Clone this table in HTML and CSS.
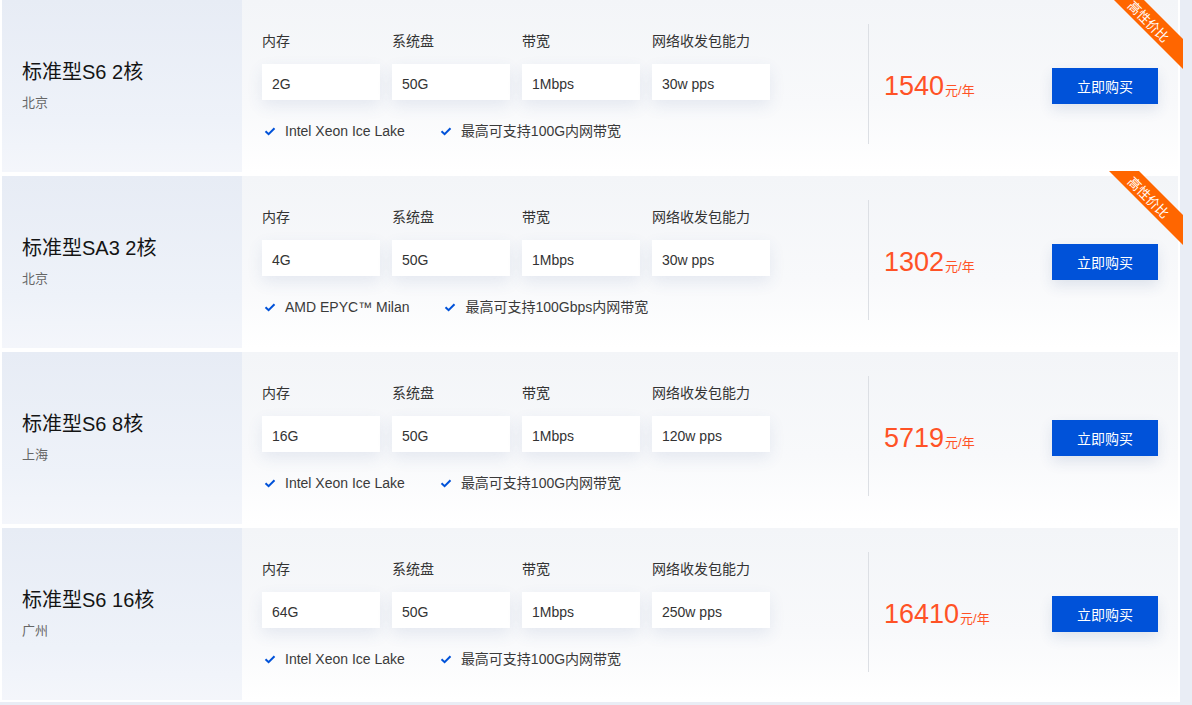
FILE: index.html
```html
<!DOCTYPE html>
<html lang="zh-CN">
<head>
<meta charset="utf-8">
<title>云服务器</title>
<link rel="stylesheet" href="styles.css">
</head>
<body>
<div class="list">
  <div class="card">
    <div class="info"><div class="name">标准型S6 2核</div><div class="region">北京</div></div>
    <div class="main">
      <div class="specs">
        <div class="grid">
          <div class="col"><div class="label">内存</div><div class="box">2G</div></div>
          <div class="col"><div class="label">系统盘</div><div class="box">50G</div></div>
          <div class="col"><div class="label">带宽</div><div class="box">1Mbps</div></div>
          <div class="col"><div class="label">网络收发包能力</div><div class="box">30w pps</div></div>
        </div>
        <div class="feats">
          <span class="feat"><svg class="check" viewBox="0 0 16 16"><path d="M3.5 8.2 L6.6 11.2 L12.5 5.2"/></svg>Intel Xeon Ice Lake</span>
          <span class="feat"><svg class="check" viewBox="0 0 16 16"><path d="M3.5 8.2 L6.6 11.2 L12.5 5.2"/></svg>最高可支持100G内网带宽</span>
        </div>
      </div>
      <div class="divider"></div>
      <div class="buy">
        <div class="price"><span class="num">1540</span><span class="unit">元/年</span></div>
        <button class="btn">立即购买</button>
      </div>
    </div>
    <svg class="ribbon" viewBox="0 0 74 74"><polygon points="0,0 30,0 74,44 74,74"/><text x="40" y="26" transform="rotate(45 40 26)">高性价比</text></svg>
  </div>

  <div class="card">
    <div class="info"><div class="name">标准型SA3 2核</div><div class="region">北京</div></div>
    <div class="main">
      <div class="specs">
        <div class="grid">
          <div class="col"><div class="label">内存</div><div class="box">4G</div></div>
          <div class="col"><div class="label">系统盘</div><div class="box">50G</div></div>
          <div class="col"><div class="label">带宽</div><div class="box">1Mbps</div></div>
          <div class="col"><div class="label">网络收发包能力</div><div class="box">30w pps</div></div>
        </div>
        <div class="feats">
          <span class="feat"><svg class="check" viewBox="0 0 16 16"><path d="M3.5 8.2 L6.6 11.2 L12.5 5.2"/></svg>AMD EPYC™ Milan</span>
          <span class="feat"><svg class="check" viewBox="0 0 16 16"><path d="M3.5 8.2 L6.6 11.2 L12.5 5.2"/></svg>最高可支持100Gbps内网带宽</span>
        </div>
      </div>
      <div class="divider"></div>
      <div class="buy">
        <div class="price"><span class="num">1302</span><span class="unit">元/年</span></div>
        <button class="btn">立即购买</button>
      </div>
    </div>
    <svg class="ribbon" viewBox="0 0 74 74"><polygon points="0,0 30,0 74,44 74,74"/><text x="40" y="26" transform="rotate(45 40 26)">高性价比</text></svg>
  </div>

  <div class="card">
    <div class="info"><div class="name">标准型S6 8核</div><div class="region">上海</div></div>
    <div class="main">
      <div class="specs">
        <div class="grid">
          <div class="col"><div class="label">内存</div><div class="box">16G</div></div>
          <div class="col"><div class="label">系统盘</div><div class="box">50G</div></div>
          <div class="col"><div class="label">带宽</div><div class="box">1Mbps</div></div>
          <div class="col"><div class="label">网络收发包能力</div><div class="box">120w pps</div></div>
        </div>
        <div class="feats">
          <span class="feat"><svg class="check" viewBox="0 0 16 16"><path d="M3.5 8.2 L6.6 11.2 L12.5 5.2"/></svg>Intel Xeon Ice Lake</span>
          <span class="feat"><svg class="check" viewBox="0 0 16 16"><path d="M3.5 8.2 L6.6 11.2 L12.5 5.2"/></svg>最高可支持100G内网带宽</span>
        </div>
      </div>
      <div class="divider"></div>
      <div class="buy">
        <div class="price"><span class="num">5719</span><span class="unit">元/年</span></div>
        <button class="btn">立即购买</button>
      </div>
    </div>
  </div>

  <div class="card">
    <div class="info"><div class="name">标准型S6 16核</div><div class="region">广州</div></div>
    <div class="main">
      <div class="specs">
        <div class="grid">
          <div class="col"><div class="label">内存</div><div class="box">64G</div></div>
          <div class="col"><div class="label">系统盘</div><div class="box">50G</div></div>
          <div class="col"><div class="label">带宽</div><div class="box">1Mbps</div></div>
          <div class="col"><div class="label">网络收发包能力</div><div class="box">250w pps</div></div>
        </div>
        <div class="feats">
          <span class="feat"><svg class="check" viewBox="0 0 16 16"><path d="M3.5 8.2 L6.6 11.2 L12.5 5.2"/></svg>Intel Xeon Ice Lake</span>
          <span class="feat"><svg class="check" viewBox="0 0 16 16"><path d="M3.5 8.2 L6.6 11.2 L12.5 5.2"/></svg>最高可支持100G内网带宽</span>
        </div>
      </div>
      <div class="divider"></div>
      <div class="buy">
        <div class="price"><span class="num">16410</span><span class="unit">元/年</span></div>
        <button class="btn">立即购买</button>
      </div>
    </div>
  </div>
</div>
</body>
</html>
```

FILE: styles.css
```css
html, body {
  margin: 0;
  padding: 0;
}
body {
  background: #e9edf5;
  font-family: "Liberation Sans", "Noto Sans CJK SC", sans-serif;
  color: #333;
}
.list {
  width: 1180px;
  box-sizing: border-box;
  background: #ffffff;
  padding: 0 2px 2px 2px;
  display: flex;
  flex-direction: column;
  gap: 4px;
}
.card {
  position: relative;
  height: 172px;
  display: flex;
}
.info {
  width: 240px;
  flex: none;
  box-sizing: border-box;
  padding-left: 20px;
  display: flex;
  flex-direction: column;
  justify-content: center;
  background: linear-gradient(180deg, #e7ecf5 0%, #eef2f9 70%, #f4f6fb 100%);
}
.name {
  font-size: 20px;
  line-height: 26px;
  color: #141414;
}
.region {
  margin-top: 8px;
  font-size: 13px;
  line-height: 20px;
  color: #666;
}
.main {
  flex: 1;
  display: flex;
  align-items: center;
  padding-left: 20px;
  background: linear-gradient(180deg, #f3f5f8 0%, #f8f9fb 60%, #ffffff 100%);
}
.specs {
  width: 606px;
  flex: none;
}
.grid {
  display: flex;
  gap: 12px;
}
.col {
  width: 118px;
}
.label {
  font-size: 14px;
  line-height: 20px;
  color: #333;
  margin-bottom: 13px;
  white-space: nowrap;
}
.box {
  height: 36px;
  box-sizing: border-box;
  padding: 2px 0 0 10px;
  line-height: 36px;
  overflow: hidden;
  background: #ffffff;
  font-size: 14px;
  color: #333;
  box-shadow: 0 6px 16px rgba(55, 90, 150, 0.1);
}
.feats {
  margin-top: 21px;
  display: flex;
  gap: 33px;
  font-size: 14px;
  line-height: 20px;
  color: #3a3a3a;
}
.feat {
  display: flex;
  align-items: center;
  white-space: nowrap;
}
.check {
  width: 16px;
  height: 16px;
  margin-right: 7px;
  fill: none;
  stroke: #0052d9;
  stroke-width: 2;
}
.divider {
  width: 1px;
  height: 120px;
  background: #dcdfe4;
  margin-top: -4px;
  flex: none;
}
.buy {
  flex: 1;
  display: flex;
  align-items: center;
  justify-content: space-between;
  padding: 0 20px 0 15px;
}
.price {
  color: #ff5226;
  white-space: nowrap;
}
.num {
  font-size: 27px;
  line-height: 32px;
}
.unit {
  font-size: 13px;
  margin-left: 1px;
}
.btn {
  width: 106px;
  height: 36px;
  border: none;
  background: #0052d9;
  color: #ffffff;
  font-family: "Liberation Sans", "Noto Sans CJK SC", sans-serif;
  font-size: 14px;
  padding: 0;
  box-shadow: 0 6px 14px rgba(40, 70, 130, 0.12);
}
.ribbon {
  position: absolute;
  top: -5px;
  right: -5px;
  width: 74px;
  height: 74px;
  overflow: visible;
}
.ribbon polygon {
  fill: #ff6600;
}
.ribbon text {
  fill: #ffffff;
  font-size: 13px;
  text-anchor: middle;
  dominant-baseline: central;
  font-family: "Noto Sans CJK SC", sans-serif;
}
```
